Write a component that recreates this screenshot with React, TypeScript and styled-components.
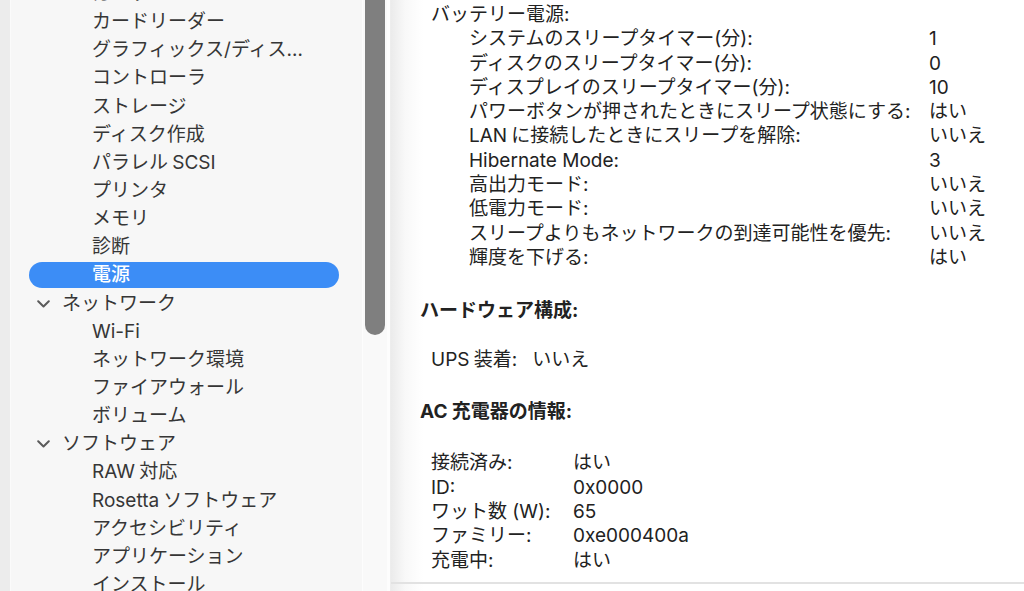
import React, { useLayoutEffect, useRef } from "react";
import styled, { createGlobalStyle } from "styled-components";

const GlobalStyle = createGlobalStyle`
  html, body {
    margin: 0;
    padding: 0;
    height: 100%;
    overflow: hidden;
    background: #ececec;
  }
  body {
    font-family: "Inter", "Noto Sans CJK JP", "Noto Sans", sans-serif;
    -webkit-font-smoothing: antialiased;
  }
  #root { height: 100%; }
`;

const Window = styled.div`
  display: flex;
  height: 591px;
  width: 1024px;
  padding-left: 10px;
  box-sizing: border-box;
  background: #ececec;
`;

const Sidebar = styled.div`
  display: flex;
  height: 100%;
  background: #f7f7f7;
  border-left: 1px solid #fbfbfb;
`;

const SidebarScroll = styled.div`
  width: 351px;
  height: 100%;
  overflow: hidden;
`;

const SidebarList = styled.ul`
  list-style: none;
  margin: 0;
  padding: 0 23px 40px 18px;
  display: flex;
  flex-direction: column;
  gap: 2.15px;
`;

const SidebarRow = styled.li<{ $selected?: boolean; $category?: boolean }>`
  display: flex;
  align-items: center;
  height: 26px;
  border-radius: 13px;
  padding-left: ${(p) => (p.$category ? "8px" : "63px")};
  padding-right: 23px;
  background: ${(p) => (p.$selected ? "#3c8df6" : "transparent")};
  color: ${(p) => (p.$selected ? "#ffffff" : "#363636")};
  font-size: 19px;
  font-weight: ${(p) => (p.$selected ? 500 : 400)};
  line-height: 26px;
  white-space: nowrap;
`;

const RowLabel = styled.span`
  overflow: hidden;
  text-overflow: ellipsis;
  min-width: 0;
`;

/* Latin runs next to Japanese text get a little breathing room */
const Latin = styled.span<{ $after?: boolean }>`
  margin: ${(p) => (p.$after ? "0 0 0 0.22em" : "0 0.22em 0 0")};
`;

const Chevron = styled.svg`
  flex: none;
  width: 13px;
  height: 8px;
  margin-right: 12px;
`;

const ScrollTrack = styled.div`
  position: relative;
  width: 24px;
  height: 100%;
  background: #f9f9f9;
  border-left: 1px solid #fdfdfd;
  overflow: hidden;
`;

const ScrollThumb = styled.div`
  position: absolute;
  left: 2px;
  top: -40px;
  width: 20px;
  height: 375px;
  border-radius: 10px;
  background: #7f7f7f;
`;

const Divider = styled.div`
  width: 3px;
  height: 100%;
  background: #fdfdfd;
  border-right: 1px solid #ededed;
`;

const Detail = styled.div`
  flex: 1;
  display: flex;
  flex-direction: column;
  height: 100%;
  background: linear-gradient(to right, #ebebeb 0px, #f8f8f8 14px, #ffffff 32px);
`;

const DetailBody = styled.div`
  flex: none;
  height: 582px;
  box-sizing: border-box;
  padding-top: 3px;
  color: #222222;
  font-size: 19px;
  line-height: 24.3px;
  overflow: hidden;
`;

const DetailFooter = styled.div`
  flex: 1;
  border-top: 2px solid #e2e2e2;
`;

const SubHeading = styled.div`
  margin-left: 40px;
`;

const Table = styled.div<{ $indent: number; $labelWidth: number }>`
  display: grid;
  grid-template-columns: ${(p) => p.$labelWidth}px auto;
  margin-left: ${(p) => p.$indent}px;
  white-space: nowrap;
`;

const Cell = styled.div``;

const SectionHeading = styled.div<{ $gap: number }>`
  margin: ${(p) => p.$gap}px 0 0 29px;
  font-weight: 700;
`;

const InlinePair = styled.div<{ $gap: number }>`
  display: flex;
  gap: 15px;
  margin: ${(p) => p.$gap}px 0 0 40px;
`;

const TableBlock = styled.div<{ $gap: number }>`
  margin-top: ${(p) => p.$gap}px;
`;

type SideItem = { label: React.ReactNode; key: string; category?: boolean; selected?: boolean };

const sideItems: SideItem[] = [
  { key: "camera", label: "カメラ" },
  { key: "card", label: "カードリーダー" },
  { key: "gfx", label: "グラフィックス/ディスプレイ" },
  { key: "ctrl", label: "コントローラ" },
  { key: "storage", label: "ストレージ" },
  { key: "burn", label: "ディスク作成" },
  { key: "scsi", label: <>パラレル<Latin $after>SCSI</Latin></> },
  { key: "printer", label: "プリンタ" },
  { key: "memory", label: "メモリ" },
  { key: "diag", label: "診断" },
  { key: "power", label: "電源", selected: true },
  { key: "network", label: "ネットワーク", category: true },
  { key: "wifi", label: "Wi-Fi" },
  { key: "locations", label: "ネットワーク環境" },
  { key: "firewall", label: "ファイアウォール" },
  { key: "volumes", label: "ボリューム" },
  { key: "software", label: "ソフトウェア", category: true },
  { key: "raw", label: <><Latin>RAW</Latin>対応</> },
  { key: "rosetta", label: <><Latin>Rosetta</Latin>ソフトウェア</> },
  { key: "a11y", label: "アクセシビリティ" },
  { key: "apps", label: "アプリケーション" },
  { key: "install", label: "インストール" },
  { key: "accounts", label: "インターネットアカウント" },
];

const batteryRows: [string, React.ReactNode, string][] = [
  ["sys", "システムのスリープタイマー(分):", "1"],
  ["disk", "ディスクのスリープタイマー(分):", "0"],
  ["disp", "ディスプレイのスリープタイマー(分):", "10"],
  ["btn", "パワーボタンが押されたときにスリープ状態にする:", "はい"],
  ["lan", <><Latin>LAN</Latin>に接続したときにスリープを解除:</>, "いいえ"],
  ["hib", "Hibernate Mode:", "3"],
  ["high", "高出力モード:", "いいえ"],
  ["low", "低電力モード:", "いいえ"],
  ["net", "スリープよりもネットワークの到達可能性を優先:", "いいえ"],
  ["dim", "輝度を下げる:", "はい"],
];

const chargerRows: [string, string][] = [
  ["接続済み:", "はい"],
  ["ID:", "0x0000"],
  ["ワット数 (W):", "65"],
  ["ファミリー:", "0xe000400a"],
  ["充電中:", "はい"],
];

function DisclosureChevron() {
  return (
    <Chevron viewBox="0 0 13 8">
      <path
        d="M1.2 1.2 L6.5 6.5 L11.8 1.2"
        fill="none"
        stroke="#5b5b5b"
        strokeWidth="2"
        strokeLinecap="round"
        strokeLinejoin="round"
      />
    </Chevron>
  );
}

export default function App() {
  const scrollRef = useRef<HTMLDivElement>(null);

  useLayoutEffect(() => {
    if (scrollRef.current) scrollRef.current.scrollTop = 19;
  }, []);

  return (
    <>
      <GlobalStyle />
      <Window>
        <Sidebar>
          <SidebarScroll ref={scrollRef}>
            <SidebarList>
              {sideItems.map((item) => (
                <SidebarRow
                  key={item.key}
                  $selected={item.selected}
                  $category={item.category}
                >
                  {item.category && <DisclosureChevron />}
                  <RowLabel>{item.label}</RowLabel>
                </SidebarRow>
              ))}
            </SidebarList>
          </SidebarScroll>
          <ScrollTrack>
            <ScrollThumb />
          </ScrollTrack>
        </Sidebar>
        <Divider />
        <Detail>
          <DetailBody>
            <SubHeading>バッテリー電源:</SubHeading>
            <Table $indent={78} $labelWidth={460}>
              {batteryRows.map(([key, k, v]) => (
                <React.Fragment key={key}>
                  <Cell>{k}</Cell>
                  <Cell>{v}</Cell>
                </React.Fragment>
              ))}
            </Table>

            <SectionHeading $gap={28.7}>ハードウェア構成:</SectionHeading>
            <InlinePair $gap={24.7}>
              <span>
                <Latin>UPS</Latin>装着:
              </span>
              <span>いいえ</span>
            </InlinePair>

            <SectionHeading $gap={27.7}>
              <Latin>AC</Latin>充電器の情報:
            </SectionHeading>
            <TableBlock $gap={27.2}>
              <Table $indent={40} $labelWidth={142}>
                {chargerRows.map(([k, v]) => (
                  <React.Fragment key={k}>
                    <Cell>{k}</Cell>
                    <Cell>{v}</Cell>
                  </React.Fragment>
                ))}
              </Table>
            </TableBlock>
          </DetailBody>
          <DetailFooter />
        </Detail>
      </Window>
    </>
  );
}
